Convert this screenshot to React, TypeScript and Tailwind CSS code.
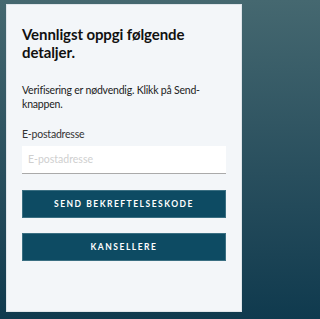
import React from "react";

export default function App() {
  return (
    <div
      className="w-full min-w-[250px] min-h-screen bg-gradient-to-b from-[#456870] to-[#0f3a4e] pt-[4px] pl-[6px]"
      style={{ fontFamily: "Lato, 'Noto Sans', sans-serif" }}
    >
      <div className="w-[236px] h-[308px] bg-[#f3f6f9] border border-[#dfe5ea] px-[15px] pt-[20px]">
        <h1 className="text-[15px] leading-[18px] font-bold text-[#111] tracking-[-0.1px]">
          Vennligst oppgi følgende detaljer.
        </h1>
        <p className="mt-[22px] text-[10.5px] leading-[14px] text-[#222] tracking-[-0.2px]">
          Verifisering er nødvendig. Klikk på Send-knappen.
        </p>
        <label className="block mt-[16px] text-[10.5px] leading-[14px] text-[#333] tracking-[-0.2px]">
          E-postadresse
        </label>
        <div className="mt-[5px] h-[28px] bg-white border-b border-[#aaaaaa] flex items-center px-[6px] text-[10.5px] text-[#cfcfcf]">
          E-postadresse
        </div>
        <button className="mt-[16px] w-full h-[28px] bg-[#0d4b63] border border-[#3a6f82] text-white text-[8.5px] font-bold tracking-[1.5px] uppercase">
          Send bekreftelseskode
        </button>
        <button className="mt-[15px] w-full h-[28px] bg-[#0d4b63] border border-[#3a6f82] text-white text-[8.5px] font-bold tracking-[1.5px] uppercase">
          Kansellere
        </button>
      </div>
    </div>
  );
}
